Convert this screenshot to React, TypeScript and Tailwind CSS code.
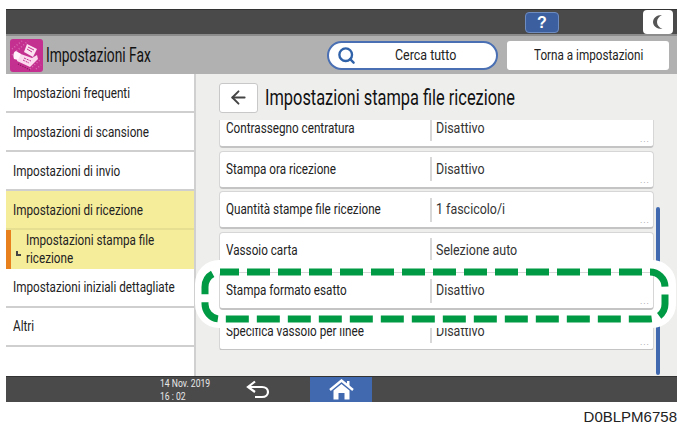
import React from 'react';
import { ArrowLeft, Search } from 'lucide-react';

const menuItems = [
  'Impostazioni frequenti',
  'Impostazioni di scansione',
  'Impostazioni di invio',
];

const rows = [
  { label: 'Contrassegno centratura', value: 'Disattivo' },
  { label: 'Stampa ora ricezione', value: 'Disattivo' },
  { label: 'Quantità stampe file ricezione', value: '1 fascicolo/i' },
  { label: 'Vassoio carta', value: 'Selezione auto' },
  { label: 'Stampa formato esatto', value: 'Disattivo', highlight: true },
  { label: 'Specifica vassoio per linee', value: 'Disattivo' },
];

// the device UI uses a condensed face, none is installed so squeeze Roboto
const Narrow = ({ children, scale = 'scale-x-[0.78]' }: { children: React.ReactNode; scale?: string }) => (
  <span className={`inline-block origin-left whitespace-nowrap ${scale}`}>{children}</span>
);

const FaxIcon = () => (
  <svg width="33" height="33" viewBox="0 0 33 33" className="shrink-0">
    <rect width="33" height="33" rx="3" fill="#c4308f" />
    <path d="M2 10 L12 2 M2 16 L18 2 M20 30 L31 20 M26 30 L31 26" stroke="#d96db5" strokeWidth="1.5" strokeDasharray="1 2" />
    <path d="M17 5 L27 10 L23 18 L14 13 Z" fill="#fbe3f2" />
    <path d="M18 8 L24 11 M17 10 L22 13" stroke="#c4308f" strokeWidth="1" />
    <path d="M8 14 L22 19 L27 16 L28 20 L20 28 L7 22 Z" fill="#fbd9ee" />
    <path d="M6 12 C3 13 3 17 4 20 L8 21 L11 15 Z" fill="#fff2fa" />
    <path d="M14 19 L21 22 M13 21 L19 24" stroke="#c4308f" strokeWidth="1" strokeDasharray="2 1" />
    <path d="M8 25 L20 31" stroke="#7d1a5a" strokeWidth="1.2" strokeDasharray="1 1.5" />
  </svg>
);

const MoonIcon = () => (
  <svg width="12" height="16" viewBox="0 0 12 16">
    <path d="M10 1 C4 1 1 4.5 1 8 C1 11.5 4 15 10.5 15 C7 13.5 5 11 5 8 C5 5 7 2.5 10 1 Z" fill="#555" />
  </svg>
);

const HomeIcon = () => (
  <svg width="25" height="21" viewBox="0 0 25 21">
    <path d="M1 11 L12.5 1.5 L24 11" fill="none" stroke="#fff" strokeWidth="2.4" />
    <path d="M18 2 h2.5 v5 h-2.5 Z" fill="#fff" />
    <path d="M4.5 11.5 L12.5 5 L20.5 11.5 V20.5 H15.5 V14 H9.5 V20.5 H4.5 Z" fill="#fff" />
  </svg>
);

const BackIcon = () => (
  <svg width="24" height="19" viewBox="0 0 24 19">
    <path d="M9 1.5 L2 7 L9 12" fill="none" stroke="#fff" strokeWidth="2.2" />
    <path d="M2.5 7 H16 C24 7 24 17 16 17 H9" fill="none" stroke="#fff" strokeWidth="2.2" />
  </svg>
);

const SettingRow = ({ label, value, highlight }: { label: string; value: string; highlight?: boolean }) => (
  <div
    className={`${highlight ? 'relative z-20' : ''} flex h-[38px] shrink-0 items-center rounded-sm border border-[#d6d6d6] border-b-2 border-b-[#c4c4c4] bg-white`}
  >
    <div className="w-[210px] pl-[6px] text-[15px] text-[#222]">
      <Narrow>{label}</Narrow>
    </div>
    <div className="flex h-[24px] flex-1 items-center border-l-2 border-[#d8d8d8] pl-[4px] text-[15px] text-[#333]">
      <Narrow scale="scale-x-[0.83]">{value}</Narrow>
    </div>
    <div className="relative h-full w-0">
      <span className="absolute right-[3px] bottom-[2px] text-[9px] leading-none tracking-[1px] text-[#999]">...</span>
    </div>
  </div>
);

export default function App() {
  return (
    <div className="relative h-[427px] w-[683px] overflow-hidden bg-white pt-[9px] pl-[6px] font-['Roboto',sans-serif]">
      <div className="relative flex h-[393px] w-[671px] flex-col">
        {/* Top bar */}
        <div className="flex h-[27px] shrink-0 items-start justify-end border-t border-[#333] border-b-2 border-b-[#8c8c8c] bg-[#4a4a4b] pr-[4px]">
          <div className="mt-[2px] mr-[84px] flex h-[21px] w-[34px] items-center justify-center rounded-sm border border-[#6f8cc0] bg-[#3c5f9f] font-['Liberation_Sans',sans-serif] text-[16px] font-bold leading-none text-white">
            ?
          </div>
          <div className="flex h-[24px] w-[30px] items-center justify-center rounded-sm bg-white">
            <MoonIcon />
          </div>
        </div>

        {/* Title bar */}
        <div className="flex h-[38px] shrink-0 items-center bg-[#b1b1b1] pl-[4px]">
          <FaxIcon />
          <div className="ml-[3px] min-w-0 flex-1 text-[20px] text-[#111]">
            <Narrow scale="scale-x-[0.69]">Impostazioni Fax</Narrow>
          </div>
          <div className="flex h-[29px] w-[171px] items-center rounded-full border-2 border-[#4a70b3] bg-white pl-[8px]">
            <Search size={19} strokeWidth={3} className="text-[#2f62a8]" />
            <span className="ml-[39px] text-[15px] text-[#222]">
              <Narrow scale="scale-x-[0.83]">Cerca tutto</Narrow>
            </span>
          </div>
          <div className="mr-[8px] ml-[9px] flex h-[29px] w-[162px] items-center rounded-[3px] bg-white pl-[27px] text-[15px] text-[#222]">
            <Narrow>Torna a impostazioni</Narrow>
          </div>
        </div>

        {/* Body */}
        <div className="flex min-h-0 flex-1">
          {/* Left menu */}
          <div className="w-[190px] shrink-0 border-r-2 border-[#d0d0d0] bg-white">
            {menuItems.map((item) => (
              <div key={item} className="flex h-[39px] items-center border-b-2 border-[#cfcfcf] pt-[1px] pl-[7px] text-[15px] text-[#222]">
                <Narrow>{item}</Narrow>
              </div>
            ))}
            <div className="flex h-[39px] items-center border-b-2 border-[#e6de90] bg-[#f6ed9b] pt-[1px] pl-[7px] text-[15px] text-[#222]">
              <Narrow>Impostazioni di ricezione</Narrow>
            </div>
            <div className="flex h-[39px] items-center border-l-[5px] border-[#e8801e] bg-[#f6ed9b] text-[15px] leading-[18px] text-[#222]">
              <span className="mt-[8px] ml-[5px] h-[5px] w-[5px] shrink-0 border-b-2 border-l-2 border-[#444]" />
              <span className="-mt-[1px] ml-[5px]">
                <Narrow>
                  Impostazioni stampa file
                  <br />
                  ricezione
                </Narrow>
              </span>
            </div>
            {['Impostazioni iniziali dettagliate', 'Altri'].map((item) => (
              <div key={item} className="flex h-[39px] items-center border-b-2 border-[#cfcfcf] pl-[7px] text-[15px] text-[#222]">
                <Narrow>{item}</Narrow>
              </div>
            ))}
          </div>

          {/* Main panel */}
          <div className="relative flex-1 bg-[#eeeeed]">
            <div className="flex h-[46px] items-center pt-[1px] pl-[23px]">
              <div className="flex h-[30px] w-[39px] items-center justify-center rounded-[3px] border border-[#c8c8c8] bg-white">
                <ArrowLeft size={21} strokeWidth={2.2} className="text-[#444]" />
              </div>
              <span className="ml-[7px] text-[22px] text-[#111]">
                <Narrow scale="scale-x-[0.745]">Impostazioni stampa file ricezione</Narrow>
              </span>
            </div>
            <div className="flex">
              <div className="ml-[23px] h-[230px] w-[435px] overflow-hidden">
                <div className="-mt-[10px] flex flex-col gap-[2.5px]">
                  {rows.map((r) => (
                    <SettingRow key={r.label} {...r} />
                  ))}
                </div>
              </div>
              <div className="mt-[87px] ml-[2px] h-[168px] w-[4px] rounded-sm bg-[#4169b0]" />
            </div>
          </div>
        </div>

        {/* Bottom bar */}
        <div className="flex h-[26px] shrink-0 items-center border-t border-[#333] bg-[#4a4a4b]">
          <div className="ml-[154px] w-[60px] text-[11px] leading-[13px] text-[#e8e8e8]">
            <Narrow>
              14 Nov. 2019
              <br />
              16 : 02
            </Narrow>
          </div>
          <div className="ml-[23px] flex w-[30px] justify-center">
            <BackIcon />
          </div>
          <div className="ml-[37px] flex h-full w-[62px] items-center justify-center bg-[#4169b0]">
            <HomeIcon />
          </div>
        </div>

        {/* Highlight annotation */}
        <div className="absolute top-[251px] left-[189px] z-10 h-[68px] w-[481px] rounded-[24px] bg-white" />
        <svg className="absolute top-[251px] left-[189px] z-30" width="481" height="68" viewBox="0 0 481 68">
          <rect x="10" y="12" width="460" height="47" rx="15" fill="none" stroke="#009a44" strokeWidth="7" strokeDasharray="23 8" strokeDashoffset="-27" />
        </svg>
      </div>
      <div className="absolute top-[408px] right-[6px] font-['Liberation_Sans',sans-serif] text-[15px] leading-[17px] text-[#222]">
        D0BLPM6758
      </div>
    </div>
  );
}
